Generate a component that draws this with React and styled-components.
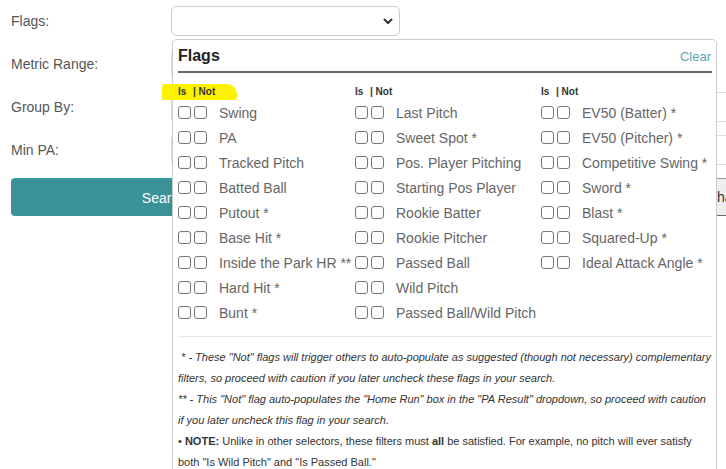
import React from "react";
import styled, { createGlobalStyle } from "styled-components";

const GlobalStyle = createGlobalStyle`
  html, body {
    margin: 0;
    padding: 0;
    background: #ffffff;
    overflow: hidden;
  }
  body {
    font-family: "Liberation Sans", Arial, sans-serif;
  }
`;

const columns = [
  {
    width: "177px",
    flags: [
      "Swing",
      "PA",
      "Tracked Pitch",
      "Batted Ball",
      "Putout *",
      "Base Hit *",
      "Inside the Park HR **",
      "Hard Hit *",
      "Bunt *",
    ],
  },
  {
    width: "186px",
    flags: [
      "Last Pitch",
      "Sweet Spot *",
      "Pos. Player Pitching",
      "Starting Pos Player",
      "Rookie Batter",
      "Rookie Pitcher",
      "Passed Ball",
      "Wild Pitch",
      "Passed Ball/Wild Pitch",
    ],
  },
  {
    width: "auto",
    flags: [
      "EV50 (Batter) *",
      "EV50 (Pitcher) *",
      "Competitive Swing *",
      "Sword *",
      "Blast *",
      "Squared-Up *",
      "Ideal Attack Angle *",
    ],
  },
];

function Chevron() {
  return (
    <svg width="10" height="7" viewBox="0 0 10 7">
      <polyline
        points="1.5,1.5 5,5 8.5,1.5"
        fill="none"
        stroke="#333"
        strokeWidth="2"
        strokeLinecap="round"
        strokeLinejoin="round"
      />
    </svg>
  );
}

function App() {
  return (
    <>
      <GlobalStyle />
      <StPage>
        <StForm>
          <StFieldRow>
            <StLabel>Flags:</StLabel>
            <StSelect>
              <Chevron />
            </StSelect>
          </StFieldRow>
          <StFieldRow>
            <StLabel>Metric Range:</StLabel>
            <StInput $width="228px" />
          </StFieldRow>
          <StFieldRow>
            <StLabel>Group By:</StLabel>
            <StInput $width="620px" />
          </StFieldRow>
          <StFieldRow>
            <StLabel>Min PA:</StLabel>
            <StInput $width="620px" />
          </StFieldRow>
          <StButtonRow>
            <StSearchButton>Search</StSearchButton>
            <StGrayButton>Chart</StGrayButton>
          </StButtonRow>
        </StForm>

        <StFlagsPanel>
          <StMarker />
          <StPanelHead>
            <StPanelTitle>Flags</StPanelTitle>
            <StClear>Clear</StClear>
          </StPanelHead>

          <StColumns>
            {columns.map((col, i) => (
              <StColumn key={i} $width={col.width}>
                <StColHead>
                  <StIs>Is</StIs>
                  <span>| Not</span>
                </StColHead>
                {col.flags.map((flag) => (
                  <StFlagRow key={flag}>
                    <StBox />
                    <StBox />
                    <StFlagText>{flag}</StFlagText>
                  </StFlagRow>
                ))}
              </StColumn>
            ))}
          </StColumns>

          <StNotes>
            <StNote $italic>
              &nbsp;* - These "Not" flags will trigger others to auto-populate as
              suggested (though not necessary) complementary filters, so proceed
              with caution if you later uncheck these flags in your search.
            </StNote>
            <StNote $italic>
              ** - This "Not" flag auto-populates the "Home Run" box in the "PA
              Result" dropdown, so proceed with caution if you later uncheck this
              flag in your search.
            </StNote>
            <StNote>
              • <b>NOTE:</b> Unlike in other selectors, these filters must{" "}
              <b>all</b> be satisfied. For example, no pitch will ever satisfy
              both "Is Wild Pitch" and "Is Passed Ball."
            </StNote>
          </StNotes>
        </StFlagsPanel>
      </StPage>
    </>
  );
}

export default App;

const StPage = styled.div`
  position: relative;
  width: 726px;
  height: 469px;
  padding: 6px 0 0 11px;
  box-sizing: border-box;
`;

const StForm = styled.div`
  display: flex;
  flex-direction: column;
  gap: 13px;
`;

const StFieldRow = styled.div`
  display: flex;
  align-items: center;
  height: 30px;
`;

const StLabel = styled.div`
  width: 160px;
  flex-shrink: 0;
  font-size: 14px;
  color: #555;
`;

const StSelect = styled.div`
  width: 229px;
  height: 30px;
  box-sizing: border-box;
  border: 1px solid #ccc;
  border-radius: 5px;
  display: flex;
  align-items: center;
  justify-content: flex-end;
  padding-right: 6px;
  flex-shrink: 0;
`;

const StInput = styled.div`
  width: ${(p) => p.$width};
  height: 30px;
  box-sizing: border-box;
  border: 1px solid #ddd;
  border-radius: 4px;
  flex-shrink: 0;
`;

const StButtonRow = styled.div`
  display: flex;
  gap: 287px;
`;

const StSearchButton = styled.div`
  width: 306px;
  height: 38px;
  box-sizing: border-box;
  flex-shrink: 0;
  background: #3a9198;
  border-top: 1px solid #2aa7ae;
  border-radius: 4px;
  color: #fff;
  font-size: 14px;
  display: flex;
  align-items: center;
  justify-content: center;
`;

const StGrayButton = styled.div`
  width: 240px;
  height: 38px;
  box-sizing: border-box;
  flex-shrink: 0;
  background: #eeeeee;
  border-top: 1px solid #999;
  border-bottom: 1px solid #666;
  color: #333;
  font-size: 14px;
  display: flex;
  align-items: center;
  justify-content: center;
`;

const StFlagsPanel = styled.div`
  position: absolute;
  left: 172px;
  top: 39px;
  width: 545px;
  height: 470px;
  box-sizing: border-box;
  background: #fff;
  border: 1px solid #ccc;
  border-radius: 5px;
  padding: 0 4px 0 5px;
`;

const StMarker = styled.div`
  position: absolute;
  left: -11px;
  top: 44px;
  width: 75px;
  height: 16px;
  background: #fff200;
  border-radius: 3px 10px 3px 2px;
  filter: blur(0.6px);
`;

const StPanelHead = styled.div`
  display: flex;
  justify-content: space-between;
  align-items: baseline;
  padding: 6px 1px 5px 0;
  border-bottom: 2px solid #666;
`;

const StPanelTitle = styled.div`
  font-size: 16px;
  font-weight: bold;
  color: #222;
  line-height: 20px;
`;

const StClear = styled.div`
  font-size: 13px;
  color: #5aa6b1;
`;

const StColumns = styled.div`
  position: relative;
  display: flex;
  margin-top: 13px;
`;

const StColumn = styled.div`
  width: ${(p) => p.$width};
  flex: ${(p) => (p.$width === "auto" ? "1" : "none")};
  display: flex;
  flex-direction: column;
`;

const StColHead = styled.div`
  font-size: 10px;
  font-weight: bold;
  color: #333;
  line-height: 12px;
  height: 14px;
  display: flex;
  white-space: pre;
`;

const StIs = styled.span`
  width: 15px;
  flex-shrink: 0;
`;

const StFlagRow = styled.div`
  display: flex;
  align-items: center;
  height: 25px;
`;

const StBox = styled.span`
  width: 13px;
  height: 13px;
  box-sizing: border-box;
  border: 1px solid #767676;
  border-radius: 3px;
  margin-right: 3px;
  flex-shrink: 0;

  & + & {
    margin-right: 12px;
  }
`;

const StFlagText = styled.span`
  font-size: 14px;
  color: #666;
  white-space: nowrap;
`;

const StNotes = styled.div`
  margin-top: 11px;
  border-top: 1px solid #e8e8e8;
  padding-top: 10px;
`;

const StNote = styled.div`
  font-size: 11px;
  line-height: 21px;
  color: #333;
  font-style: ${(p) => (p.$italic ? "italic" : "normal")};
`;
